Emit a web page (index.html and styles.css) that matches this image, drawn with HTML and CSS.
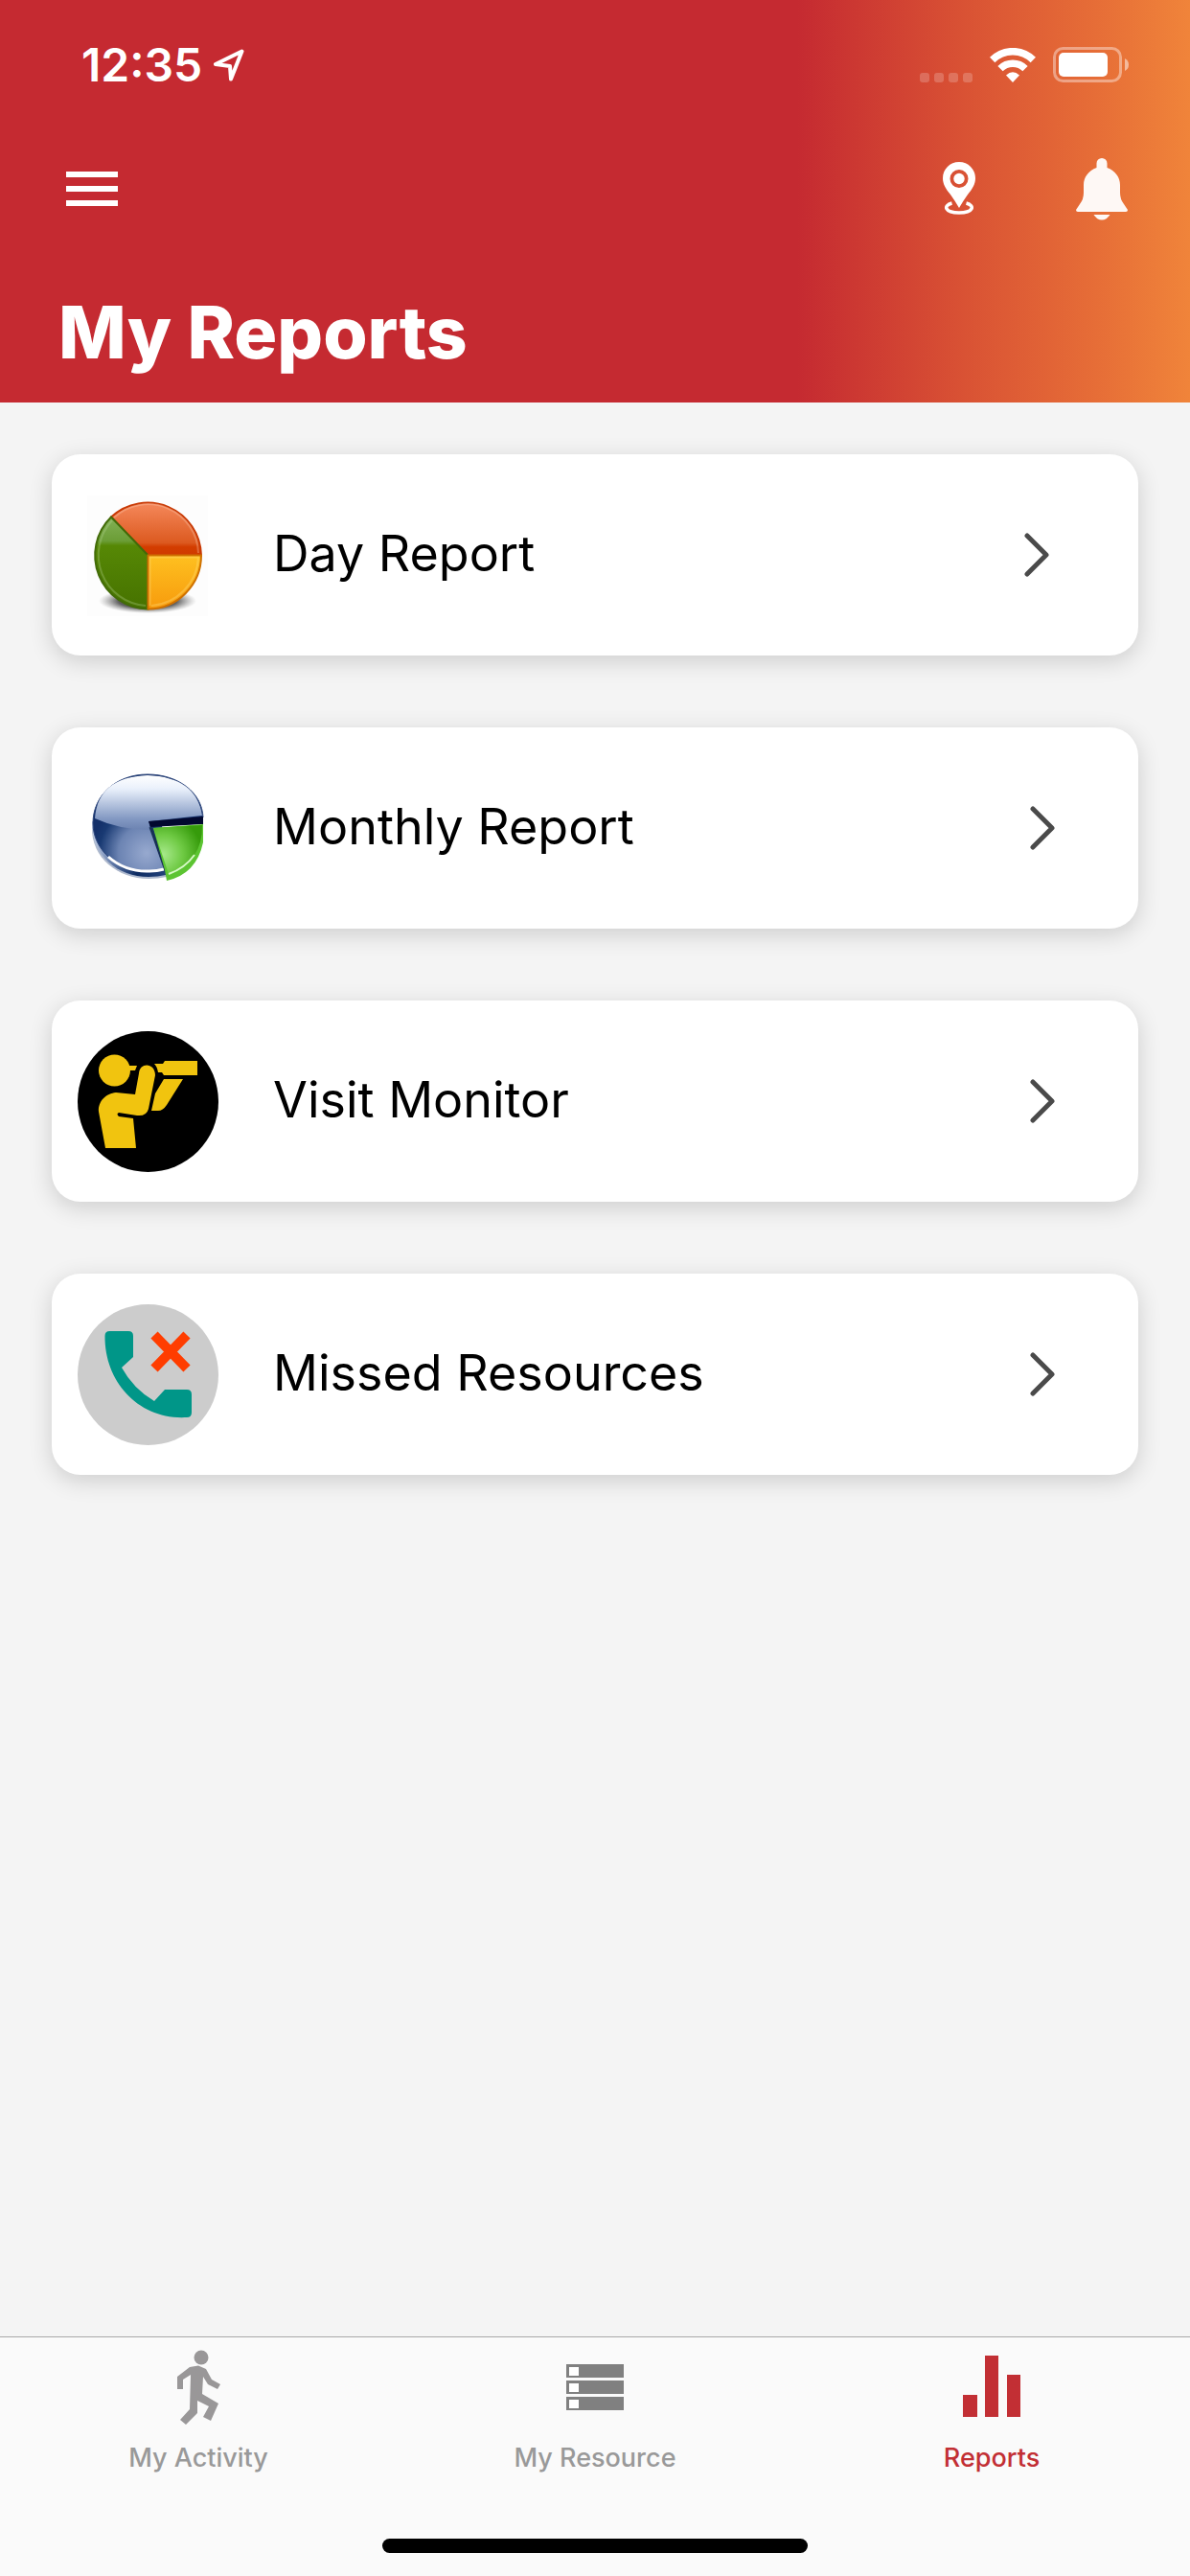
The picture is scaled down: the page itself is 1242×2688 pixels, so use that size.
FILE: index.html
```html
<!DOCTYPE html>
<html lang="en">
<head>
<meta charset="utf-8">
<meta name="viewport" content="width=device-width, initial-scale=1">
<title>My Reports</title>
<link rel="stylesheet" href="styles.css">
</head>
<body>
<div class="app">
  <header class="header">
    <div class="status">
      <div class="status-left">
        <span class="time">12:35</span>
        <svg class="location" width="32" height="34" viewBox="0 0 32 34" aria-hidden="true"><path d="M29.500 2.500 L2 16 L17 18 L18 31.500 Z" fill="none" stroke="#fff" stroke-width="4" stroke-linejoin="round"/></svg>
      </div>
      <div class="status-right">
        <svg width="55" height="36" viewBox="0 0 55 36" aria-hidden="true"><g fill="#fff" opacity=".2"><rect x="0" y="26" width="10" height="10" rx="3"/><rect x="15" y="26" width="10" height="10" rx="3"/><rect x="30" y="26" width="10" height="10" rx="3"/><rect x="45" y="26" width="10" height="10" rx="3"/></g></svg>
        <svg class="wifi" width="48" height="36" viewBox="0 0 48 36" aria-hidden="true"><g fill="none" stroke="#fff" stroke-width="7.500"><path d="M2.700 12.500 A30 30 0 0 1 45.300 12.500"/><path d="M11 21.700 A18.500 18.500 0 0 1 37 21.700"/></g><path d="M17 28.500 Q24 22 31 28.500 L24 36 Z" fill="#fff"/></svg>
        <svg class="battery" width="80" height="38" viewBox="0 0 80 38" aria-hidden="true"><rect x="1.500" y="1.500" width="69" height="34" rx="9" fill="none" stroke="#fff" stroke-opacity=".4" stroke-width="3"/><rect x="6" y="6" width="51" height="25" rx="5" fill="#fff"/><path d="M75 12 Q79 14 79 18.500 T75 25 Z" fill="#fff" fill-opacity=".5"/></svg>
      </div>
    </div>
    <div class="toolbar">
      <button class="icon-button" type="button" aria-label="Menu">
        <svg width="54" height="36" viewBox="0 0 54 36" fill="#fff" aria-hidden="true"><path d="M0 0H54V6H0zM0 15H54V21H0zM0 30H54V36H0z"/></svg>
      </button>
      <div class="actions">
        <button class="icon-button" type="button" aria-label="Location">
          <svg width="34" height="56" viewBox="0 0 34 56" aria-hidden="true"><path fill="#fff" fill-rule="evenodd" d="M17 0 C7.500 0 0 7.500 0 17 C0 23 3 28 8 34 Q13 41 17 48 Q21 41 26 34 C31 28 34 23 34 17 C34 7.500 26.500 0 17 0 Z M17 8 A9.500 9.500 0 1 0 17 27 A9.500 9.500 0 1 0 17 8 Z"/><circle cx="17" cy="17.500" r="5.700" fill="#fff"/><path d="M9.500 43 C0 45.500 2 53 17 53 S34 45.500 24.500 43" fill="none" stroke="#fff" stroke-width="3.500"/></svg>
        </button>
        <button class="icon-button" type="button" aria-label="Notifications">
          <svg width="54" height="65" viewBox="0 0 54 65" fill="#fef8f5" aria-hidden="true"><path d="M21.500 10 V5.500 A5.500 5.500 0 0 1 32.500 5.500 V10 C41 13 46 20 46 28 V36 Q46 43 50 48 L54 54 Q54 56 52 56 H2 Q0 56 0 54 L4 48 Q8 43 8 36 V28 C8 20 13 13 21.500 10Z"/><path d="M18.500 59H35.500Q32 64.500 27 64.500T18.500 59Z"/></svg>
        </button>
      </div>
    </div>
    <h1 class="title">My Reports</h1>
  </header>

  <main class="reports">
    <a class="card" href="#day">
      <svg class="card-icon" viewBox="0 0 147 147" aria-hidden="true">
        <defs>
          <linearGradient id="dr" x1="0" y1="0" x2="0" y2="1"><stop offset="0" stop-color="#f5885b"/><stop offset=".76" stop-color="#dc5a20"/><stop offset=".84" stop-color="#d33d00"/><stop offset="1" stop-color="#cf3b00"/></linearGradient>
          <linearGradient id="dg" x1="0" y1="0" x2="0" y2="1"><stop offset="0" stop-color="#83b156"/><stop offset=".26" stop-color="#6b9d36"/><stop offset=".31" stop-color="#568805"/><stop offset="1" stop-color="#467200"/></linearGradient>
          <linearGradient id="dy" x1="0" y1="0" x2="0" y2="1"><stop offset="0" stop-color="#fec020"/><stop offset="1" stop-color="#f79b0d"/></linearGradient>
          <radialGradient id="ds"><stop offset="0" stop-color="#111"/><stop offset=".6" stop-color="#444" stop-opacity=".85"/><stop offset="1" stop-color="#888" stop-opacity="0"/></radialGradient>
        </defs>
        <rect x="10" y="11" width="126" height="126" fill="#fdfdfd"/>
        <ellipse cx="73" cy="121" rx="51" ry="13" fill="url(#ds)"/>
        <path d="M73.500 73.500 L35 33.500 A56 56 0 0 1 129 73.500Z" fill="url(#dr)" stroke="#c93a05" stroke-width="2"/>
        <path d="M73.500 73.500 V129.500 A56 56 0 0 1 35 33.500Z" fill="url(#dg)" stroke="#426b08" stroke-width="2"/>
        <path d="M73.500 73.500 H129 A56 56 0 0 1 73.500 129.500Z" fill="url(#dy)" stroke="#cf7100" stroke-width="2"/>
        <g fill="none" stroke-width="2" stroke-opacity=".3"><path d="M38 34 A52.500 52.500 0 0 1 126 71" stroke="#ffd4bd"/><path d="M71 126 A53 53 0 0 1 36 37" stroke="#b8d798"/><path d="M75.500 126 V75.500 H126 A53 53 0 0 1 77 126" stroke="#ffe38c"/></g>
      </svg>
      <span class="card-label">Day Report</span>
      <svg class="chevron chevron-inset" viewBox="0 0 26 46" aria-hidden="true"><path d="M3 3 L23 23 L3 43"/></svg>
    </a>
    <a class="card" href="#monthly">
      <svg class="card-icon" viewBox="0 0 147 147" aria-hidden="true">
        <defs>
          <linearGradient id="mb" x1="0" y1="0" x2="0" y2="1"><stop offset="0" stop-color="#fff"/><stop offset=".25" stop-color="#e9f0fb"/><stop offset=".8" stop-color="#8298c2"/><stop offset="1" stop-color="#6c83b1"/></linearGradient>
          <radialGradient id="ml" gradientUnits="userSpaceOnUse" cx="72" cy="99" r="58"><stop offset="0" stop-color="#97a9cf"/><stop offset=".5" stop-color="#6c84b3"/><stop offset=".85" stop-color="#193a73"/><stop offset="1" stop-color="#14306a"/></radialGradient>
          <linearGradient id="mr" x1="0" y1="0" x2="1" y2="0"><stop offset="0" stop-color="#c4d1e8"/><stop offset=".3" stop-color="#5872a2"/><stop offset=".6" stop-color="#0d2b62"/><stop offset="1" stop-color="#24437b"/></linearGradient>
          <radialGradient id="mg" cx=".2" cy=".6" r=".8"><stop offset="0" stop-color="#a7e98b"/><stop offset=".5" stop-color="#6fca44"/><stop offset="1" stop-color="#369b0b"/></radialGradient>
        </defs>
        <path d="M15 72 C14 104 42 126 74 126 Q84 126 93 124 L88 70Z" fill="#aeb9cd"/>
        <path d="M15 66 C14 102 42 124 74 124 Q84 124 92 122 L88 70Z" fill="url(#mr)"/>
        <path d="M74 66 L131 62 C130 36 105 17 73 17 C40 17 16 39 16 68 C16 96 42 119 75 119 Q83 119 91 117Z" fill="url(#ml)" stroke="#2d467c" stroke-width="1"/>
        <path d="M18 63 Q21 20 73 18 Q124 20 130 60 L74 66 L76 75 Q44 75 18 63Z" fill="url(#mb)"/>
        <path d="M32 103 Q50 119 75 118 Q83 118 90 116" fill="none" stroke="#fff" stroke-width="3"/>
        <path d="M74 66 L131 61 V69 L76 72Z" fill="#02082f"/>
        <path d="M76 72 L93 120" stroke="#183056" stroke-width="3"/>
        <path d="M79 73 L131 69 V88 Q124 121 93 128 L91 117Z" fill="#5cc432"/>
        <path d="M79 73 L130 70 Q131 107 95 121Z" fill="url(#mg)"/>
        <path d="M95 121 Q112 115 122 101" fill="none" stroke="#d6f9c6" stroke-width="2"/>
      </svg>
      <span class="card-label">Monthly Report</span>
      <svg class="chevron" viewBox="0 0 26 46" aria-hidden="true"><path d="M3 3 L23 23 L3 43"/></svg>
    </a>
    <a class="card" href="#visits">
      <svg class="card-icon" viewBox="0 0 147 147" aria-hidden="true">
        <circle cx="73.500" cy="73.500" r="73.500"/>
        <g fill="#f1c40f"><circle cx="38.500" cy="41" r="16.500"/><path d="M53 36H62L60 41H53zM80 34H89L91 31H125V46H90L88 43H84Q83 37 80 34ZM90 50H110L93 77Q89 83 84 83H77L81 65Z"/><path d="M64 44 C65 32 81 33 81 46 L74 81 Q72 89 62 88 L43 85 Q40 86 43 89 L58 91 L61 122 H29 L22 84 C21 73 30 65 40 64 L60 66Z"/></g>
      </svg>
      <span class="card-label">Visit Monitor</span>
      <svg class="chevron" viewBox="0 0 26 46" aria-hidden="true"><path d="M3 3 L23 23 L3 43"/></svg>
    </a>
    <a class="card" href="#missed">
      <svg class="card-icon" viewBox="0 0 147 147" aria-hidden="true">
        <circle cx="73.500" cy="73.500" r="73.500" fill="#ccc"/>
        <path fill="#009688" d="M33.500 28H53Q58 28 58 33V55L46 66Q58 88 80 101L91 89H114Q119 89 119 94V113Q119 118 114 118C65 121 28 82 28.500 33Q28.500 28 33.500 28Z"/>
        <path d="M80 32L114 67M114 32L80 67" stroke="#ff3d00" stroke-width="10"/>
      </svg>
      <span class="card-label">Missed Resources</span>
      <svg class="chevron" viewBox="0 0 26 46" aria-hidden="true"><path d="M3 3 L23 23 L3 43"/></svg>
    </a>
  </main>

  <footer class="footer">
    <nav class="tabs" aria-label="Main">
      <a class="tab" href="#activity">
        <svg class="tab-icon" viewBox="0 0 80 80" fill="#999798" aria-hidden="true"><ellipse cx="43" cy="8" rx="7.500" ry="7.500"/><path d="M31 18L40 16.500L48 20L54 31L63 36L60 41L50 36L45 28L44 46L61 56L53 74L45 70L51 59L39 53V66L27 78L21 73L31 62L32 26L24 31V41H18V28Z"/></svg>
        <span>My Activity</span>
      </a>
      <a class="tab" href="#resource">
        <svg class="tab-icon" viewBox="0 0 80 80" aria-hidden="true"><path fill="#808080" d="M10 15H70V29H10zM10 32H70V46H10zM10 49H70V63H10z"/><path fill="#fff" d="M13 18H23V27H13zM13 35H23V44H13zM13 52H23V61H13z"/></svg>
        <span>My Resource</span>
      </a>
      <a class="tab tab-active" href="#reports" aria-current="page">
        <svg class="tab-icon" viewBox="0 0 80 80" fill="#c22f34" aria-hidden="true"><path d="M10 47H25V70H10zM33 6H47V70H33zM56 26H70V70H56z"/></svg>
        <span>Reports</span>
      </a>
    </nav>
    <div class="home-indicator"></div>
  </footer>
</div>
</body>
</html>
```
FILE: styles.css
```css
* {
  box-sizing: border-box;
}

body {
  margin: 0;
  background: #f4f4f4;
  color: #000;
  font-family: Inter, "Open Sans", sans-serif;
}

.app {
  display: flex;
  flex-direction: column;
  min-height: 100vh;
}

svg {
  display: block;
  flex: none;
}

.header {
  padding: 36px 63px 22px 61px;
  background: linear-gradient(90deg, #c52a31 67%, #d95234 81%, #e66d37 92%, #f0843a 100%);
  color: #fff;
}

.status,
.status-left,
.status-right,
.toolbar,
.actions {
  display: flex;
  align-items: center;
}

.status,
.toolbar {
  justify-content: space-between;
}

.status {
  height: 64px;
  padding-left: 24px;
}

.status-left {
  gap: 12px;
}

.time {
  font-size: 48px;
  line-height: 64px;
  font-weight: 600;
}

.status-right {
  gap: 18px;
}

.toolbar {
  height: 128px;
  margin-top: 33px;
  padding-left: 8px;
}

.actions {
  gap: 105px;
  padding-right: 2px;
}

.icon-button {
  padding: 0;
  border: 0;
  background: none;
}

.title {
  margin: 35px 0 0;
  font-size: 75px;
  line-height: 102px;
  font-weight: 800;
}

.reports {
  display: flex;
  flex: 1;
  flex-direction: column;
  gap: 75px;
  padding: 54px;
}

.card {
  display: flex;
  align-items: center;
  height: 210px;
  padding: 0 87px 0 27px;
  border-radius: 30px;
  background: #fff;
  box-shadow: 0 6px 24px rgba(0, 0, 0, .16);
  color: inherit;
  text-decoration: none;
}

.card-icon {
  width: 147px;
  height: 147px;
}

.card-label {
  flex: 1;
  margin-left: 57px;
  padding-bottom: 2px;
  font-size: 52px;
  line-height: 72px;
}

.chevron {
  width: 26px;
  height: 46px;
  fill: none;
  stroke: #4a4a4a;
  stroke-width: 5px;
  stroke-linecap: round;
  stroke-linejoin: round;
}

.chevron-inset {
  margin-right: 6px;
}

.footer {
  padding-bottom: 24px;
  border-top: 1px solid #a8a8a8;
  background: #fafafa;
}

.tabs {
  display: grid;
  grid-template-columns: repeat(3, 1fr);
  height: 210px;
  padding-top: 13px;
}

.tab {
  display: flex;
  flex-direction: column;
  align-items: center;
  gap: 12px;
  color: #999;
  font-size: 27px;
  line-height: 42px;
  font-weight: 500;
  text-decoration: none;
}

.tab-active {
  color: #c22f34;
}

.tab-icon {
  width: 80px;
  height: 80px;
}

.home-indicator {
  width: 444px;
  height: 15px;
  margin: 0 auto;
  border-radius: 8px;
  background: #000;
}
```
